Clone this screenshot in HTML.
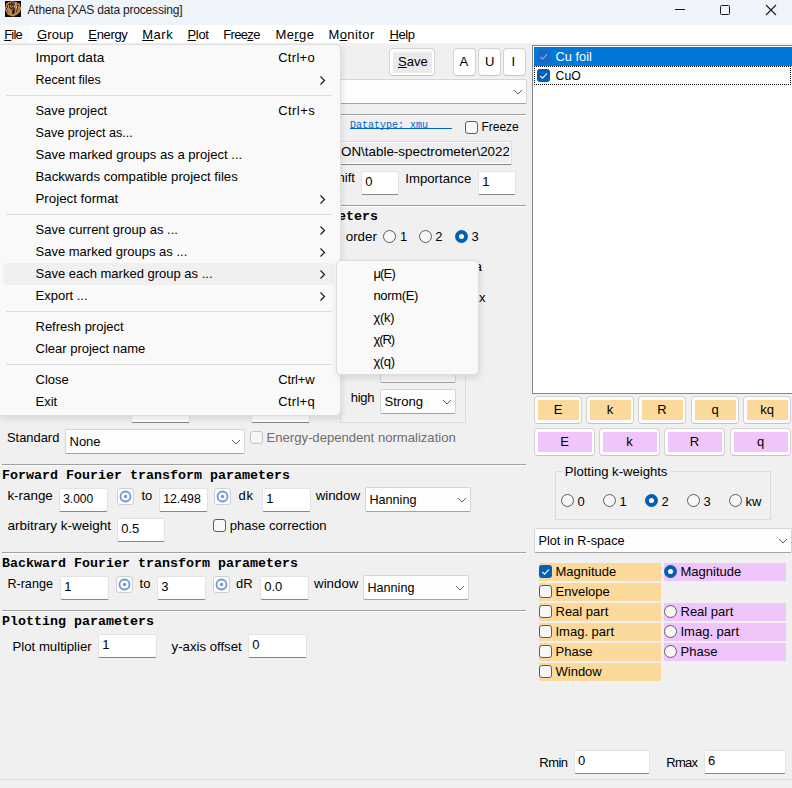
<!DOCTYPE html>
<html><head><meta charset="utf-8"><style>
html,body{margin:0;padding:0;}
body{width:792px;height:788px;overflow:hidden;position:relative;background:#f0f0f0;font-family:'Liberation Sans',sans-serif;}
div{position:absolute;}
.t{white-space:pre;}
u{text-decoration:underline;text-underline-offset:1px;}
</style></head><body>
<div style="left:389px;top:48px;width:46px;height:28px;background:#fdfdfd;border:1px solid #d2d2d2;border-bottom-color:#c4c4c4;border-radius:4px;box-sizing:border-box;"></div><div style="left:392.5px;top:51.5px;width:39px;height:21px;background:#ece9eb;"></div><div class="t" style="left:398.00px;top:54px;font-size:13px;line-height:16px;color:#000;font-family:'Liberation Sans',sans-serif;"><u>S</u>ave</div><div style="left:453px;top:48px;width:23px;height:28px;background:#fdfdfd;border:1px solid #d2d2d2;border-bottom-color:#c4c4c4;border-radius:4px;box-sizing:border-box;"></div><div class="t" style="left:459.50px;top:54px;font-size:13px;line-height:16px;color:#000;font-family:'Liberation Sans',sans-serif;">A</div><div style="left:478px;top:48px;width:23px;height:28px;background:#fdfdfd;border:1px solid #d2d2d2;border-bottom-color:#c4c4c4;border-radius:4px;box-sizing:border-box;"></div><div class="t" style="left:485.00px;top:54px;font-size:13px;line-height:16px;color:#000;font-family:'Liberation Sans',sans-serif;">U</div><div style="left:503px;top:48px;width:23px;height:28px;background:#fdfdfd;border:1px solid #d2d2d2;border-bottom-color:#c4c4c4;border-radius:4px;box-sizing:border-box;"></div><div class="t" style="left:511.50px;top:54px;font-size:13px;line-height:16px;color:#000;font-family:'Liberation Sans',sans-serif;">I</div><div style="left:60px;top:79px;width:467px;height:25px;background:#fdfdfd;border:1px solid #d5d5d5;border-bottom-color:#a3a3a3;box-sizing:border-box;border-radius:2px;"></div><svg style="position:absolute;left:513px;top:87.5px" width="10" height="8"><path d="M1 2 L5 6 L9 2" fill="none" stroke="#5f5f5f" stroke-width="1.0"/></svg><div style="left:2px;top:114px;width:524px;height:1px;background:#a0a0a0;"></div><div style="left:2px;top:115px;width:524px;height:1px;background:#ffffff;"></div><div class="t" style="left:350.00px;top:118px;font-size:10px;line-height:16px;color:#0066cc;font-family:'Liberation Mono',monospace;">Datatype: xmu</div><div style="left:350px;top:128px;width:102px;height:1px;background:#0066cc;"></div><div style="left:465px;top:121px;width:13px;height:13px;background:#f8f8f8;border:1px solid #5c5c5c;border-radius:3px;box-sizing:border-box;"></div><div class="t" style="left:481.60px;top:119px;font-size:12.0px;line-height:16px;color:#000;font-family:'Liberation Sans',sans-serif;letter-spacing:-0.070px;">Freeze</div><div style="left:60px;top:141px;width:452px;height:24px;background:#eeeeee;border:1px solid #dadada;border-bottom-color:#878787;box-shadow:inset 1px 1px 0 #fff,inset -1px -1px 0 #fff;box-sizing:border-box;border-radius:2px;"></div><div class="t" style="left:341.00px;top:144px;font-size:13.4px;line-height:16px;color:#000;font-family:'Liberation Sans',sans-serif;width:168px;overflow:hidden;white-space:nowrap;">ON\table-spectrometer\20221103\Cu</div><div class="t" style="left:286.25px;top:170px;font-size:13px;line-height:16px;color:#000;font-family:'Liberation Sans',sans-serif;">Energy shift</div><div style="left:361px;top:171px;width:38px;height:24px;background:#fff;border:1px solid #e3e3e3;border-bottom:1px solid #868686;box-sizing:border-box;border-radius:2px;"></div><div class="t" style="left:365.20px;top:174px;font-size:13px;line-height:16px;color:#000;font-family:'Liberation Sans',sans-serif;">0</div><div class="t" style="left:405.30px;top:171px;font-size:13.2px;line-height:16px;color:#000;font-family:'Liberation Sans',sans-serif;">Importance</div><div style="left:478px;top:171px;width:38px;height:24px;background:#fff;border:1px solid #e3e3e3;border-bottom:1px solid #868686;box-sizing:border-box;border-radius:2px;"></div><div class="t" style="left:482.20px;top:174px;font-size:13px;line-height:16px;color:#000;font-family:'Liberation Sans',sans-serif;">1</div><div style="left:2px;top:205px;width:524px;height:1px;background:#a0a0a0;"></div><div style="left:2px;top:206px;width:524px;height:1px;background:#ffffff;"></div><div class="t" style="left:2.00px;top:209px;font-size:13.33px;line-height:16px;color:#000;font-family:'Liberation Mono',monospace;font-weight:bold;">Background removal and normalization parameters</div><div class="t" style="left:345.70px;top:229px;font-size:13.4px;line-height:16px;color:#000;font-family:'Liberation Sans',sans-serif;">order</div><div style="left:383px;top:230px;width:13px;height:13px;background:#f8f8f8;border:1px solid #5c5c5c;border-radius:50%;box-sizing:border-box;"></div><div class="t" style="left:400.00px;top:229px;font-size:13px;line-height:16px;color:#000;font-family:'Liberation Sans',sans-serif;">1</div><div style="left:419px;top:230px;width:13px;height:13px;background:#f8f8f8;border:1px solid #5c5c5c;border-radius:50%;box-sizing:border-box;"></div><div class="t" style="left:435.20px;top:229px;font-size:13px;line-height:16px;color:#000;font-family:'Liberation Sans',sans-serif;">2</div><div style="left:455px;top:230px;width:13px;height:13px;background:#005fb8;border-radius:50%;"></div><div style="left:459px;top:234px;width:5px;height:5px;background:#fff;border-radius:50%;"></div><div class="t" style="left:471.40px;top:229px;font-size:13px;line-height:16px;color:#000;font-family:'Liberation Sans',sans-serif;">3</div><div class="t" style="left:474.80px;top:259px;font-size:13px;line-height:16px;color:#000;font-family:'Liberation Sans',sans-serif;">a</div><div class="t" style="left:476.00px;top:290px;font-size:13px;line-height:16px;color:#000;font-family:'Liberation Sans',sans-serif;">ix</div><div style="left:340px;top:300px;width:126px;height:123px;border:1px solid #dcdcdc;box-sizing:border-box;"></div><div style="left:380px;top:359px;width:76px;height:24px;background:#f5f5f5;border:1px solid #d5d5d5;border-bottom-color:#a3a3a3;box-sizing:border-box;border-radius:2px;"></div><svg style="position:absolute;left:442px;top:367.0px" width="10" height="8"><path d="M1 2 L5 6 L9 2" fill="none" stroke="#5f5f5f" stroke-width="1.0"/></svg><div class="t" style="left:350.70px;top:390px;font-size:13px;line-height:16px;color:#000;font-family:'Liberation Sans',sans-serif;letter-spacing:-0.267px;">high</div><div style="left:380px;top:389px;width:76px;height:25px;background:#fdfdfd;border:1px solid #d5d5d5;border-bottom-color:#a3a3a3;box-sizing:border-box;border-radius:2px;"></div><svg style="position:absolute;left:442px;top:397.5px" width="10" height="8"><path d="M1 2 L5 6 L9 2" fill="none" stroke="#5f5f5f" stroke-width="1.0"/></svg><div class="t" style="left:384.50px;top:394px;font-size:13.1px;line-height:16px;color:#000;font-family:'Liberation Sans',sans-serif;">Strong</div><div style="left:131px;top:399px;width:59px;height:24px;background:#fff;border:1px solid #e3e3e3;border-bottom:1px solid #868686;box-sizing:border-box;border-radius:2px;"></div><div style="left:251px;top:399px;width:59px;height:24px;background:#fff;border:1px solid #e3e3e3;border-bottom:1px solid #868686;box-sizing:border-box;border-radius:2px;"></div><div class="t" style="left:7.00px;top:430px;font-size:12.9px;line-height:16px;color:#000;font-family:'Liberation Sans',sans-serif;">Standard</div><div style="left:65px;top:429px;width:180px;height:25px;background:#fdfdfd;border:1px solid #d5d5d5;border-bottom-color:#a3a3a3;box-sizing:border-box;border-radius:2px;"></div><svg style="position:absolute;left:231px;top:437.5px" width="10" height="8"><path d="M1 2 L5 6 L9 2" fill="none" stroke="#5f5f5f" stroke-width="1.0"/></svg><div class="t" style="left:69.50px;top:434px;font-size:13px;line-height:16px;color:#000;font-family:'Liberation Sans',sans-serif;">None</div><div style="left:250px;top:431px;width:13px;height:13px;background:#f6f6f6;border:1px solid #c6c6c6;border-radius:3px;box-sizing:border-box;"></div><div class="t" style="left:266.50px;top:430px;font-size:13.1px;line-height:16px;color:#6d6d6d;font-family:'Liberation Sans',sans-serif;">Energy-dependent normalization</div><div style="left:2px;top:464px;width:524px;height:1px;background:#a0a0a0;"></div><div style="left:2px;top:465px;width:524px;height:1px;background:#ffffff;"></div><div class="t" style="left:2.00px;top:468px;font-size:13.33px;line-height:16px;color:#000;font-family:'Liberation Mono',monospace;font-weight:bold;">Forward Fourier transform parameters</div><div class="t" style="left:7.40px;top:488px;font-size:13.4px;line-height:16px;color:#000;font-family:'Liberation Sans',sans-serif;">k-range</div><div style="left:59px;top:488px;width:49px;height:24px;background:#fff;border:1px solid #e3e3e3;border-bottom:1px solid #868686;box-sizing:border-box;border-radius:2px;"></div><div class="t" style="left:63.20px;top:491px;font-size:12.0px;line-height:16px;color:#000;font-family:'Liberation Sans',sans-serif;">3.000</div><div style="left:117px;top:488px;width:17px;height:17px;background:#fdfdfd;border:1px solid #d0d0d0;border-radius:3px;box-sizing:border-box;"></div><svg style="position:absolute;left:117px;top:488px" width="17" height="17"><circle cx="8.5" cy="8.5" r="5" fill="none" stroke="#7197d6" stroke-width="1.8"/><circle cx="8.5" cy="8.5" r="1.7" fill="#7197d6"/></svg><div class="t" style="left:141.40px;top:488px;font-size:13px;line-height:16px;color:#000;font-family:'Liberation Sans',sans-serif;">to</div><div style="left:159px;top:488px;width:49px;height:24px;background:#fff;border:1px solid #e3e3e3;border-bottom:1px solid #868686;box-sizing:border-box;border-radius:2px;"></div><div class="t" style="left:163.20px;top:491px;font-size:12.3px;line-height:16px;color:#000;font-family:'Liberation Sans',sans-serif;">12.498</div><div style="left:214px;top:488px;width:17px;height:17px;background:#fdfdfd;border:1px solid #d0d0d0;border-radius:3px;box-sizing:border-box;"></div><svg style="position:absolute;left:214px;top:488px" width="17" height="17"><circle cx="8.5" cy="8.5" r="5" fill="none" stroke="#7197d6" stroke-width="1.8"/><circle cx="8.5" cy="8.5" r="1.7" fill="#7197d6"/></svg><div class="t" style="left:238.60px;top:488px;font-size:13px;line-height:16px;color:#000;font-family:'Liberation Sans',sans-serif;letter-spacing:0.800px;">dk</div><div style="left:262px;top:488px;width:49px;height:24px;background:#fff;border:1px solid #e3e3e3;border-bottom:1px solid #868686;box-sizing:border-box;border-radius:2px;"></div><div class="t" style="left:266.20px;top:491px;font-size:13px;line-height:16px;color:#000;font-family:'Liberation Sans',sans-serif;">1</div><div class="t" style="left:315.65px;top:488px;font-size:13.3px;line-height:16px;color:#000;font-family:'Liberation Sans',sans-serif;">window</div><div style="left:365px;top:487px;width:106px;height:25px;background:#fdfdfd;border:1px solid #d5d5d5;border-bottom-color:#a3a3a3;box-sizing:border-box;border-radius:2px;"></div><svg style="position:absolute;left:457px;top:495.5px" width="10" height="8"><path d="M1 2 L5 6 L9 2" fill="none" stroke="#5f5f5f" stroke-width="1.0"/></svg><div class="t" style="left:369.50px;top:492px;font-size:12.6px;line-height:16px;color:#000;font-family:'Liberation Sans',sans-serif;">Hanning</div><div class="t" style="left:7.40px;top:518px;font-size:13.5px;line-height:16px;color:#000;font-family:'Liberation Sans',sans-serif;">arbitrary k-weight</div><div style="left:117px;top:518px;width:48px;height:24px;background:#fff;border:1px solid #e3e3e3;border-bottom:1px solid #868686;box-sizing:border-box;border-radius:2px;"></div><div class="t" style="left:121.20px;top:521px;font-size:13px;line-height:16px;color:#000;font-family:'Liberation Sans',sans-serif;">0.5</div><div style="left:213px;top:519px;width:13px;height:13px;background:#f8f8f8;border:1px solid #5c5c5c;border-radius:3px;box-sizing:border-box;"></div><div class="t" style="left:229.70px;top:518px;font-size:13.1px;line-height:16px;color:#000;font-family:'Liberation Sans',sans-serif;">phase correction</div><div style="left:2px;top:552px;width:524px;height:1px;background:#a0a0a0;"></div><div style="left:2px;top:553px;width:524px;height:1px;background:#ffffff;"></div><div class="t" style="left:2.00px;top:556px;font-size:13.33px;line-height:16px;color:#000;font-family:'Liberation Mono',monospace;font-weight:bold;">Backward Fourier transform parameters</div><div class="t" style="left:7.40px;top:576px;font-size:12.6px;line-height:16px;color:#000;font-family:'Liberation Sans',sans-serif;">R-range</div><div style="left:60px;top:576px;width:49px;height:24px;background:#fff;border:1px solid #e3e3e3;border-bottom:1px solid #868686;box-sizing:border-box;border-radius:2px;"></div><div class="t" style="left:64.20px;top:579px;font-size:13px;line-height:16px;color:#000;font-family:'Liberation Sans',sans-serif;">1</div><div style="left:116px;top:576px;width:17px;height:17px;background:#fdfdfd;border:1px solid #d0d0d0;border-radius:3px;box-sizing:border-box;"></div><svg style="position:absolute;left:116px;top:576px" width="17" height="17"><circle cx="8.5" cy="8.5" r="5" fill="none" stroke="#7197d6" stroke-width="1.8"/><circle cx="8.5" cy="8.5" r="1.7" fill="#7197d6"/></svg><div class="t" style="left:139.60px;top:576px;font-size:13px;line-height:16px;color:#000;font-family:'Liberation Sans',sans-serif;">to</div><div style="left:157px;top:576px;width:49px;height:24px;background:#fff;border:1px solid #e3e3e3;border-bottom:1px solid #868686;box-sizing:border-box;border-radius:2px;"></div><div class="t" style="left:161.20px;top:579px;font-size:13px;line-height:16px;color:#000;font-family:'Liberation Sans',sans-serif;">3</div><div style="left:213px;top:576px;width:17px;height:17px;background:#fdfdfd;border:1px solid #d0d0d0;border-radius:3px;box-sizing:border-box;"></div><svg style="position:absolute;left:213px;top:576px" width="17" height="17"><circle cx="8.5" cy="8.5" r="5" fill="none" stroke="#7197d6" stroke-width="1.8"/><circle cx="8.5" cy="8.5" r="1.7" fill="#7197d6"/></svg><div class="t" style="left:236.00px;top:576px;font-size:13px;line-height:16px;color:#000;font-family:'Liberation Sans',sans-serif;letter-spacing:-0.100px;">dR</div><div style="left:260px;top:576px;width:49px;height:24px;background:#fff;border:1px solid #e3e3e3;border-bottom:1px solid #868686;box-sizing:border-box;border-radius:2px;"></div><div class="t" style="left:264.20px;top:579px;font-size:13px;line-height:16px;color:#000;font-family:'Liberation Sans',sans-serif;">0.0</div><div class="t" style="left:314.05px;top:576px;font-size:13.3px;line-height:16px;color:#000;font-family:'Liberation Sans',sans-serif;">window</div><div style="left:363px;top:575px;width:106px;height:25px;background:#fdfdfd;border:1px solid #d5d5d5;border-bottom-color:#a3a3a3;box-sizing:border-box;border-radius:2px;"></div><svg style="position:absolute;left:455px;top:583.5px" width="10" height="8"><path d="M1 2 L5 6 L9 2" fill="none" stroke="#5f5f5f" stroke-width="1.0"/></svg><div class="t" style="left:367.50px;top:580px;font-size:12.6px;line-height:16px;color:#000;font-family:'Liberation Sans',sans-serif;">Hanning</div><div style="left:2px;top:610px;width:524px;height:1px;background:#a0a0a0;"></div><div style="left:2px;top:611px;width:524px;height:1px;background:#ffffff;"></div><div class="t" style="left:2.00px;top:614px;font-size:13.33px;line-height:16px;color:#000;font-family:'Liberation Mono',monospace;font-weight:bold;">Plotting parameters</div><div class="t" style="left:12.50px;top:639px;font-size:13.2px;line-height:16px;color:#000;font-family:'Liberation Sans',sans-serif;">Plot multiplier</div><div style="left:98px;top:634px;width:59px;height:24px;background:#fff;border:1px solid #e3e3e3;border-bottom:1px solid #868686;box-sizing:border-box;border-radius:2px;"></div><div class="t" style="left:102.20px;top:637px;font-size:13px;line-height:16px;color:#000;font-family:'Liberation Sans',sans-serif;">1</div><div class="t" style="left:171.60px;top:639px;font-size:13.2px;line-height:16px;color:#000;font-family:'Liberation Sans',sans-serif;">y-axis offset</div><div style="left:248px;top:634px;width:59px;height:24px;background:#fff;border:1px solid #e3e3e3;border-bottom:1px solid #868686;box-sizing:border-box;border-radius:2px;"></div><div class="t" style="left:252.20px;top:637px;font-size:13px;line-height:16px;color:#000;font-family:'Liberation Sans',sans-serif;">0</div><div style="left:0px;top:779px;width:792px;height:1px;background:#dadada;"></div><div style="left:532px;top:45px;width:262px;height:349px;background:#fff;border:1px solid #828790;box-sizing:border-box;"></div><div style="left:534px;top:47px;width:258px;height:19px;background:#0078d7;"></div><div style="left:537px;top:50px;width:13px;height:13px;background:#1a66c2;border-radius:3px;"></div><svg style="position:absolute;left:537px;top:50px" width="13" height="13"><path d="M3.2 6.8 L5.6 9.2 L10 4.4" fill="none" stroke="#7fb0e6" stroke-width="1.1"/></svg><div class="t" style="left:555.60px;top:49px;font-size:12.8px;line-height:16px;color:#fff;font-family:'Liberation Sans',sans-serif;">Cu foil</div><div style="left:534px;top:66px;width:257px;height:19px;border:1px dotted #000;box-sizing:border-box;"></div><div style="left:537px;top:69px;width:13px;height:13px;background:#005fb8;border-radius:3px;"></div><svg style="position:absolute;left:537px;top:69px" width="13" height="13"><path d="M3.2 6.8 L5.6 9.2 L10 4.4" fill="none" stroke="#fff" stroke-width="1.1"/></svg><div class="t" style="left:555.60px;top:68px;font-size:12.2px;line-height:16px;color:#000;font-family:'Liberation Sans',sans-serif;">CuO</div><div style="left:534px;top:396px;width:48px;height:28px;background:#fdfdfd;border:1px solid #d2d2d2;border-bottom-color:#c4c4c4;border-radius:4px;box-sizing:border-box;"></div><div style="left:537.5px;top:400px;width:41px;height:20px;background:#fad99b;"></div><div class="t" style="left:553.66px;top:402px;font-size:13px;line-height:16px;color:#000;font-family:'Liberation Sans',sans-serif;">E</div><div style="left:586px;top:396px;width:48px;height:28px;background:#fdfdfd;border:1px solid #d2d2d2;border-bottom-color:#c4c4c4;border-radius:4px;box-sizing:border-box;"></div><div style="left:589.5px;top:400px;width:41px;height:20px;background:#fad99b;"></div><div class="t" style="left:606.75px;top:402px;font-size:13px;line-height:16px;color:#000;font-family:'Liberation Sans',sans-serif;">k</div><div style="left:638px;top:396px;width:48px;height:28px;background:#fdfdfd;border:1px solid #d2d2d2;border-bottom-color:#c4c4c4;border-radius:4px;box-sizing:border-box;"></div><div style="left:641.5px;top:400px;width:41px;height:20px;background:#fad99b;"></div><div class="t" style="left:657.31px;top:402px;font-size:13px;line-height:16px;color:#000;font-family:'Liberation Sans',sans-serif;">R</div><div style="left:691px;top:396px;width:48px;height:28px;background:#fdfdfd;border:1px solid #d2d2d2;border-bottom-color:#c4c4c4;border-radius:4px;box-sizing:border-box;"></div><div style="left:694.5px;top:400px;width:41px;height:20px;background:#fad99b;"></div><div class="t" style="left:711.39px;top:402px;font-size:13px;line-height:16px;color:#000;font-family:'Liberation Sans',sans-serif;">q</div><div style="left:743px;top:396px;width:48px;height:28px;background:#fdfdfd;border:1px solid #d2d2d2;border-bottom-color:#c4c4c4;border-radius:4px;box-sizing:border-box;"></div><div style="left:746.5px;top:400px;width:41px;height:20px;background:#fad99b;"></div><div class="t" style="left:760.14px;top:402px;font-size:13px;line-height:16px;color:#000;font-family:'Liberation Sans',sans-serif;">kq</div><div style="left:534px;top:428px;width:61px;height:28px;background:#fdfdfd;border:1px solid #d2d2d2;border-bottom-color:#c4c4c4;border-radius:4px;box-sizing:border-box;"></div><div style="left:537.5px;top:432px;width:54px;height:20px;background:#efc5fb;"></div><div class="t" style="left:560.16px;top:434px;font-size:13px;line-height:16px;color:#000;font-family:'Liberation Sans',sans-serif;">E</div><div style="left:599px;top:428px;width:61px;height:28px;background:#fdfdfd;border:1px solid #d2d2d2;border-bottom-color:#c4c4c4;border-radius:4px;box-sizing:border-box;"></div><div style="left:602.5px;top:432px;width:54px;height:20px;background:#efc5fb;"></div><div class="t" style="left:626.25px;top:434px;font-size:13px;line-height:16px;color:#000;font-family:'Liberation Sans',sans-serif;">k</div><div style="left:664px;top:428px;width:61px;height:28px;background:#fdfdfd;border:1px solid #d2d2d2;border-bottom-color:#c4c4c4;border-radius:4px;box-sizing:border-box;"></div><div style="left:667.5px;top:432px;width:54px;height:20px;background:#efc5fb;"></div><div class="t" style="left:689.81px;top:434px;font-size:13px;line-height:16px;color:#000;font-family:'Liberation Sans',sans-serif;">R</div><div style="left:730px;top:428px;width:61px;height:28px;background:#fdfdfd;border:1px solid #d2d2d2;border-bottom-color:#c4c4c4;border-radius:4px;box-sizing:border-box;"></div><div style="left:733.5px;top:432px;width:54px;height:20px;background:#efc5fb;"></div><div class="t" style="left:756.89px;top:434px;font-size:13px;line-height:16px;color:#000;font-family:'Liberation Sans',sans-serif;">q</div><div style="left:555px;top:471px;width:216px;height:49px;border:1px solid #dcdcdc;box-sizing:border-box;"></div><div style="left:562px;top:465px;width:109px;height:12px;background:#f0f0f0;"></div><div class="t" style="left:564.80px;top:464px;font-size:13.1px;line-height:16px;color:#000;font-family:'Liberation Sans',sans-serif;">Plotting k-weights</div><div style="left:561px;top:494px;width:13px;height:13px;background:#f8f8f8;border:1px solid #5c5c5c;border-radius:50%;box-sizing:border-box;"></div><div class="t" style="left:577.50px;top:494px;font-size:13px;line-height:16px;color:#000;font-family:'Liberation Sans',sans-serif;">0</div><div style="left:603px;top:494px;width:13px;height:13px;background:#f8f8f8;border:1px solid #5c5c5c;border-radius:50%;box-sizing:border-box;"></div><div class="t" style="left:619.50px;top:494px;font-size:13px;line-height:16px;color:#000;font-family:'Liberation Sans',sans-serif;">1</div><div style="left:645px;top:494px;width:13px;height:13px;background:#005fb8;border-radius:50%;"></div><div style="left:649px;top:498px;width:5px;height:5px;background:#fff;border-radius:50%;"></div><div class="t" style="left:661.50px;top:494px;font-size:13px;line-height:16px;color:#000;font-family:'Liberation Sans',sans-serif;">2</div><div style="left:687px;top:494px;width:13px;height:13px;background:#f8f8f8;border:1px solid #5c5c5c;border-radius:50%;box-sizing:border-box;"></div><div class="t" style="left:703.50px;top:494px;font-size:13px;line-height:16px;color:#000;font-family:'Liberation Sans',sans-serif;">3</div><div style="left:729px;top:494px;width:13px;height:13px;background:#f8f8f8;border:1px solid #5c5c5c;border-radius:50%;box-sizing:border-box;"></div><div class="t" style="left:745.50px;top:494px;font-size:13px;line-height:16px;color:#000;font-family:'Liberation Sans',sans-serif;">kw</div><div style="left:534px;top:528px;width:258px;height:25px;background:#fdfdfd;border:1px solid #d5d5d5;border-bottom-color:#a3a3a3;box-sizing:border-box;border-radius:2px;"></div><svg style="position:absolute;left:778px;top:536.5px" width="10" height="8"><path d="M1 2 L5 6 L9 2" fill="none" stroke="#5f5f5f" stroke-width="1.0"/></svg><div class="t" style="left:538.50px;top:533px;font-size:12.7px;line-height:16px;color:#000;font-family:'Liberation Sans',sans-serif;">Plot in R-space</div><div style="left:539px;top:563px;width:122px;height:18px;background:#fad99b;"></div><div style="left:539px;top:565px;width:13px;height:13px;background:#005fb8;border-radius:3px;"></div><svg style="position:absolute;left:539px;top:565px" width="13" height="13"><path d="M3.2 6.8 L5.6 9.2 L10 4.4" fill="none" stroke="#fff" stroke-width="1.1"/></svg><div class="t" style="left:555.50px;top:564px;font-size:13px;line-height:16px;color:#000;font-family:'Liberation Sans',sans-serif;">Magnitude</div><div style="left:539px;top:583px;width:122px;height:18px;background:#fad99b;"></div><div style="left:539px;top:585px;width:13px;height:13px;background:#f8f8f8;border:1px solid #5c5c5c;border-radius:3px;box-sizing:border-box;"></div><div class="t" style="left:555.50px;top:584px;font-size:13px;line-height:16px;color:#000;font-family:'Liberation Sans',sans-serif;">Envelope</div><div style="left:539px;top:603px;width:122px;height:18px;background:#fad99b;"></div><div style="left:539px;top:605px;width:13px;height:13px;background:#f8f8f8;border:1px solid #5c5c5c;border-radius:3px;box-sizing:border-box;"></div><div class="t" style="left:555.50px;top:604px;font-size:13px;line-height:16px;color:#000;font-family:'Liberation Sans',sans-serif;">Real part</div><div style="left:539px;top:623px;width:122px;height:18px;background:#fad99b;"></div><div style="left:539px;top:625px;width:13px;height:13px;background:#f8f8f8;border:1px solid #5c5c5c;border-radius:3px;box-sizing:border-box;"></div><div class="t" style="left:555.50px;top:624px;font-size:13px;line-height:16px;color:#000;font-family:'Liberation Sans',sans-serif;">Imag. part</div><div style="left:539px;top:643px;width:122px;height:18px;background:#fad99b;"></div><div style="left:539px;top:645px;width:13px;height:13px;background:#f8f8f8;border:1px solid #5c5c5c;border-radius:3px;box-sizing:border-box;"></div><div class="t" style="left:555.50px;top:644px;font-size:13px;line-height:16px;color:#000;font-family:'Liberation Sans',sans-serif;">Phase</div><div style="left:539px;top:663px;width:122px;height:18px;background:#fad99b;"></div><div style="left:539px;top:665px;width:13px;height:13px;background:#f8f8f8;border:1px solid #5c5c5c;border-radius:3px;box-sizing:border-box;"></div><div class="t" style="left:555.50px;top:664px;font-size:13px;line-height:16px;color:#000;font-family:'Liberation Sans',sans-serif;">Window</div><div style="left:664px;top:563px;width:122px;height:18px;background:#efc5fb;"></div><div style="left:664px;top:565px;width:13px;height:13px;background:#005fb8;border-radius:50%;"></div><div style="left:668px;top:569px;width:5px;height:5px;background:#fff;border-radius:50%;"></div><div class="t" style="left:680.50px;top:564px;font-size:13px;line-height:16px;color:#000;font-family:'Liberation Sans',sans-serif;">Magnitude</div><div style="left:664px;top:603px;width:122px;height:18px;background:#efc5fb;"></div><div style="left:664px;top:605px;width:13px;height:13px;background:#f8f8f8;border:1px solid #5c5c5c;border-radius:50%;box-sizing:border-box;"></div><div class="t" style="left:680.50px;top:604px;font-size:13px;line-height:16px;color:#000;font-family:'Liberation Sans',sans-serif;">Real part</div><div style="left:664px;top:623px;width:122px;height:18px;background:#efc5fb;"></div><div style="left:664px;top:625px;width:13px;height:13px;background:#f8f8f8;border:1px solid #5c5c5c;border-radius:50%;box-sizing:border-box;"></div><div class="t" style="left:680.50px;top:624px;font-size:13px;line-height:16px;color:#000;font-family:'Liberation Sans',sans-serif;">Imag. part</div><div style="left:664px;top:643px;width:122px;height:18px;background:#efc5fb;"></div><div style="left:664px;top:645px;width:13px;height:13px;background:#f8f8f8;border:1px solid #5c5c5c;border-radius:50%;box-sizing:border-box;"></div><div class="t" style="left:680.50px;top:644px;font-size:13px;line-height:16px;color:#000;font-family:'Liberation Sans',sans-serif;">Phase</div><div class="t" style="left:539.30px;top:755px;font-size:13px;line-height:16px;color:#000;font-family:'Liberation Sans',sans-serif;letter-spacing:-0.550px;">Rmin</div><div style="left:574px;top:750px;width:76px;height:24px;background:#fff;border:1px solid #e3e3e3;border-bottom:1px solid #868686;box-sizing:border-box;border-radius:2px;"></div><div class="t" style="left:578.00px;top:753px;font-size:13px;line-height:16px;color:#000;font-family:'Liberation Sans',sans-serif;">0</div><div class="t" style="left:666.30px;top:755px;font-size:13px;line-height:16px;color:#000;font-family:'Liberation Sans',sans-serif;letter-spacing:-0.750px;">Rmax</div><div style="left:704px;top:750px;width:82px;height:24px;background:#fff;border:1px solid #e3e3e3;border-bottom:1px solid #868686;box-sizing:border-box;border-radius:2px;"></div><div class="t" style="left:708.00px;top:753px;font-size:13px;line-height:16px;color:#000;font-family:'Liberation Sans',sans-serif;">6</div>
<div style="left:0px;top:0px;width:792px;height:25px;background:#eef4fa;"></div><svg style="position:absolute;left:5px;top:1px" width="16" height="16" shape-rendering="crispEdges"><rect x="0" y="0" width="5" height="1" fill="#0c0a0a"/><rect x="5" y="0" width="1" height="1" fill="#4a3420"/><rect x="6" y="0" width="1" height="1" fill="#b8824f"/><rect x="7" y="0" width="2" height="1" fill="#4c4c60"/><rect x="9" y="0" width="1" height="1" fill="#4a3420"/><rect x="10" y="0" width="6" height="1" fill="#0c0a0a"/><rect x="0" y="1" width="2" height="1" fill="#0c0a0a"/><rect x="2" y="1" width="1" height="1" fill="#4a3420"/><rect x="3" y="1" width="3" height="1" fill="#b8824f"/><rect x="6" y="1" width="1" height="1" fill="#4a3420"/><rect x="7" y="1" width="2" height="1" fill="#4c4c60"/><rect x="9" y="1" width="3" height="1" fill="#b8824f"/><rect x="12" y="1" width="1" height="1" fill="#4a3420"/><rect x="13" y="1" width="3" height="1" fill="#0c0a0a"/><rect x="0" y="2" width="1" height="1" fill="#0c0a0a"/><rect x="1" y="2" width="1" height="1" fill="#4a3420"/><rect x="2" y="2" width="2" height="1" fill="#b8824f"/><rect x="4" y="2" width="3" height="1" fill="#4a3420"/><rect x="7" y="2" width="2" height="1" fill="#4c4c60"/><rect x="9" y="2" width="1" height="1" fill="#4a3420"/><rect x="10" y="2" width="1" height="1" fill="#e3b574"/><rect x="11" y="2" width="1" height="1" fill="#b8824f"/><rect x="12" y="2" width="1" height="1" fill="#4a3420"/><rect x="13" y="2" width="1" height="1" fill="#b8824f"/><rect x="14" y="2" width="1" height="1" fill="#4a3420"/><rect x="15" y="2" width="1" height="1" fill="#0c0a0a"/><rect x="0" y="3" width="1" height="1" fill="#0c0a0a"/><rect x="1" y="3" width="2" height="1" fill="#b8824f"/><rect x="3" y="3" width="5" height="1" fill="#4a3420"/><rect x="8" y="3" width="1" height="1" fill="#4c4c60"/><rect x="9" y="3" width="1" height="1" fill="#4a3420"/><rect x="10" y="3" width="1" height="1" fill="#e3b574"/><rect x="11" y="3" width="4" height="1" fill="#b8824f"/><rect x="15" y="3" width="1" height="1" fill="#0c0a0a"/><rect x="0" y="4" width="1" height="1" fill="#4a3420"/><rect x="1" y="4" width="1" height="1" fill="#b8824f"/><rect x="2" y="4" width="1" height="1" fill="#4a3420"/><rect x="3" y="4" width="1" height="1" fill="#b8824f"/><rect x="4" y="4" width="1" height="1" fill="#4a3420"/><rect x="5" y="4" width="1" height="1" fill="#b8824f"/><rect x="6" y="4" width="3" height="1" fill="#4a3420"/><rect x="9" y="4" width="3" height="1" fill="#b8824f"/><rect x="12" y="4" width="2" height="1" fill="#4a3420"/><rect x="14" y="4" width="1" height="1" fill="#b8824f"/><rect x="15" y="4" width="1" height="1" fill="#4a3420"/><rect x="0" y="5" width="1" height="1" fill="#4a3420"/><rect x="1" y="5" width="1" height="1" fill="#b8824f"/><rect x="2" y="5" width="1" height="1" fill="#4a3420"/><rect x="3" y="5" width="1" height="1" fill="#e3b574"/><rect x="4" y="5" width="1" height="1" fill="#4a3420"/><rect x="5" y="5" width="1" height="1" fill="#b8824f"/><rect x="6" y="5" width="1" height="1" fill="#4a3420"/><rect x="7" y="5" width="4" height="1" fill="#b8824f"/><rect x="11" y="5" width="1" height="1" fill="#e3b574"/><rect x="12" y="5" width="1" height="1" fill="#4a3420"/><rect x="13" y="5" width="2" height="1" fill="#b8824f"/><rect x="15" y="5" width="1" height="1" fill="#4a3420"/><rect x="0" y="6" width="2" height="1" fill="#b8824f"/><rect x="2" y="6" width="1" height="1" fill="#4a3420"/><rect x="3" y="6" width="1" height="1" fill="#b8824f"/><rect x="4" y="6" width="2" height="1" fill="#4a3420"/><rect x="6" y="6" width="1" height="1" fill="#b8824f"/><rect x="7" y="6" width="2" height="1" fill="#4a3420"/><rect x="9" y="6" width="2" height="1" fill="#b8824f"/><rect x="11" y="6" width="1" height="1" fill="#e3b574"/><rect x="12" y="6" width="1" height="1" fill="#4a3420"/><rect x="13" y="6" width="3" height="1" fill="#b8824f"/><rect x="0" y="7" width="1" height="1" fill="#b8824f"/><rect x="1" y="7" width="1" height="1" fill="#4a3420"/><rect x="2" y="7" width="3" height="1" fill="#b8824f"/><rect x="5" y="7" width="5" height="1" fill="#4a3420"/><rect x="10" y="7" width="2" height="1" fill="#b8824f"/><rect x="12" y="7" width="1" height="1" fill="#4a3420"/><rect x="13" y="7" width="3" height="1" fill="#b8824f"/><rect x="0" y="8" width="1" height="1" fill="#b8824f"/><rect x="1" y="8" width="1" height="1" fill="#4a3420"/><rect x="2" y="8" width="4" height="1" fill="#b8824f"/><rect x="6" y="8" width="1" height="1" fill="#4a3420"/><rect x="7" y="8" width="1" height="1" fill="#b8824f"/><rect x="8" y="8" width="2" height="1" fill="#4a3420"/><rect x="10" y="8" width="2" height="1" fill="#b8824f"/><rect x="12" y="8" width="1" height="1" fill="#4a3420"/><rect x="13" y="8" width="3" height="1" fill="#b8824f"/><rect x="0" y="9" width="1" height="1" fill="#4a3420"/><rect x="1" y="9" width="6" height="1" fill="#b8824f"/><rect x="7" y="9" width="1" height="1" fill="#4a3420"/><rect x="8" y="9" width="1" height="1" fill="#0c0a0a"/><rect x="9" y="9" width="1" height="1" fill="#4a3420"/><rect x="10" y="9" width="1" height="1" fill="#b8824f"/><rect x="11" y="9" width="1" height="1" fill="#4a3420"/><rect x="12" y="9" width="3" height="1" fill="#b8824f"/><rect x="15" y="9" width="1" height="1" fill="#4a3420"/><rect x="0" y="10" width="1" height="1" fill="#4a3420"/><rect x="1" y="10" width="1" height="1" fill="#b8824f"/><rect x="2" y="10" width="1" height="1" fill="#4a3420"/><rect x="3" y="10" width="4" height="1" fill="#b8824f"/><rect x="7" y="10" width="1" height="1" fill="#4a3420"/><rect x="8" y="10" width="1" height="1" fill="#0c0a0a"/><rect x="9" y="10" width="1" height="1" fill="#4a3420"/><rect x="10" y="10" width="1" height="1" fill="#b8824f"/><rect x="11" y="10" width="1" height="1" fill="#4a3420"/><rect x="12" y="10" width="3" height="1" fill="#b8824f"/><rect x="15" y="10" width="1" height="1" fill="#4a3420"/><rect x="0" y="11" width="1" height="1" fill="#0c0a0a"/><rect x="1" y="11" width="1" height="1" fill="#4a3420"/><rect x="2" y="11" width="5" height="1" fill="#b8824f"/><rect x="7" y="11" width="1" height="1" fill="#4a3420"/><rect x="8" y="11" width="1" height="1" fill="#0c0a0a"/><rect x="9" y="11" width="1" height="1" fill="#4a3420"/><rect x="10" y="11" width="4" height="1" fill="#b8824f"/><rect x="14" y="11" width="1" height="1" fill="#4a3420"/><rect x="15" y="11" width="1" height="1" fill="#0c0a0a"/><rect x="0" y="12" width="2" height="1" fill="#0c0a0a"/><rect x="2" y="12" width="5" height="1" fill="#b8824f"/><rect x="7" y="12" width="1" height="1" fill="#4a3420"/><rect x="8" y="12" width="1" height="1" fill="#0c0a0a"/><rect x="9" y="12" width="4" height="1" fill="#b8824f"/><rect x="13" y="12" width="1" height="1" fill="#4a3420"/><rect x="14" y="12" width="2" height="1" fill="#0c0a0a"/><rect x="0" y="13" width="2" height="1" fill="#0c0a0a"/><rect x="2" y="13" width="1" height="1" fill="#4a3420"/><rect x="3" y="13" width="9" height="1" fill="#b8824f"/><rect x="12" y="13" width="1" height="1" fill="#4a3420"/><rect x="13" y="13" width="3" height="1" fill="#0c0a0a"/><rect x="0" y="14" width="4" height="1" fill="#0c0a0a"/><rect x="4" y="14" width="1" height="1" fill="#4a3420"/><rect x="5" y="14" width="5" height="1" fill="#b8824f"/><rect x="10" y="14" width="1" height="1" fill="#4a3420"/><rect x="11" y="14" width="5" height="1" fill="#0c0a0a"/><rect x="0" y="15" width="6" height="1" fill="#0c0a0a"/><rect x="6" y="15" width="4" height="1" fill="#4a3420"/><rect x="10" y="15" width="6" height="1" fill="#0c0a0a"/></svg><div class="t" style="left:27.50px;top:2px;font-size:12.0px;line-height:16px;color:#1a1a1a;font-family:'Liberation Sans',sans-serif;letter-spacing:-0.189px;">Athena [XAS data processing]</div><div style="left:675px;top:9px;width:10px;height:1px;background:#1a1a1a;"></div><div style="left:720px;top:5px;width:10px;height:9.5px;border:1px solid #1a1a1a;border-radius:1.5px;box-sizing:border-box;"></div><svg style="position:absolute;left:765px;top:4px" width="12" height="12"><path d="M1 1 L11 11 M11 1 L1 11" stroke="#1a1a1a" stroke-width="1.1"/></svg><div style="left:0px;top:25px;width:792px;height:18px;background:#ffffff;"></div><div style="left:0px;top:25px;width:30px;height:18px;background:#f9f9f9;"></div><div style="left:0px;top:43px;width:792px;height:1px;background:#f2f2f2;"></div><div class="t" style="left:4.20px;top:27px;font-size:13px;line-height:16px;color:#000;font-family:'Liberation Sans',sans-serif;letter-spacing:-0.783px;"><u>F</u>ile</div><div class="t" style="left:37.00px;top:27px;font-size:13px;line-height:16px;color:#000;font-family:'Liberation Sans',sans-serif;letter-spacing:0.113px;"><u>G</u>roup</div><div class="t" style="left:88.30px;top:27px;font-size:13px;line-height:16px;color:#000;font-family:'Liberation Sans',sans-serif;letter-spacing:-0.340px;"><u>E</u>nergy</div><div class="t" style="left:142.20px;top:27px;font-size:13px;line-height:16px;color:#000;font-family:'Liberation Sans',sans-serif;letter-spacing:0.550px;"><u>M</u>ark</div><div class="t" style="left:187.50px;top:27px;font-size:13px;line-height:16px;color:#000;font-family:'Liberation Sans',sans-serif;letter-spacing:-0.333px;"><u>P</u>lot</div><div class="t" style="left:223.20px;top:27px;font-size:13px;line-height:16px;color:#000;font-family:'Liberation Sans',sans-serif;letter-spacing:-0.650px;">Free<u>z</u>e</div><div class="t" style="left:275.50px;top:27px;font-size:13px;line-height:16px;color:#000;font-family:'Liberation Sans',sans-serif;letter-spacing:0.387px;">Me<u>r</u>ge</div><div class="t" style="left:328.40px;top:27px;font-size:13px;line-height:16px;color:#000;font-family:'Liberation Sans',sans-serif;letter-spacing:0.425px;">M<u>o</u>nitor</div><div class="t" style="left:389.40px;top:27px;font-size:13px;line-height:16px;color:#000;font-family:'Liberation Sans',sans-serif;letter-spacing:-0.383px;"><u>H</u>elp</div>
<div style="left:-1px;top:44px;width:342px;height:372px;background:#f9f9f9;border:1px solid #dedede;border-radius:0 5px 5px 0;box-sizing:border-box;box-shadow:1px 3px 7px rgba(0,0,0,0.11);"></div><div class="t" style="left:35.50px;top:50px;font-size:13.6px;line-height:16px;color:#000;font-family:'Liberation Sans',sans-serif;">Import data</div><div class="t" style="left:278.20px;top:50px;font-size:13px;line-height:16px;color:#000;font-family:'Liberation Sans',sans-serif;letter-spacing:0.290px;">Ctrl+o</div><div class="t" style="left:35.50px;top:72px;font-size:12.5px;line-height:16px;color:#000;font-family:'Liberation Sans',sans-serif;">Recent files</div><svg style="position:absolute;left:318px;top:75px" width="9" height="11"><path d="M2.5 1.5 L6.5 5.5 L2.5 9.5" fill="none" stroke="#1a1a1a" stroke-width="1.2"/></svg><div style="left:6px;top:95px;width:326px;height:1px;background:#dcdcdc;"></div><div class="t" style="left:35.50px;top:103px;font-size:12.9px;line-height:16px;color:#000;font-family:'Liberation Sans',sans-serif;">Save project</div><div class="t" style="left:278.20px;top:103px;font-size:13px;line-height:16px;color:#000;font-family:'Liberation Sans',sans-serif;letter-spacing:0.440px;">Ctrl+s</div><div class="t" style="left:35.50px;top:125px;font-size:12.6px;line-height:16px;color:#000;font-family:'Liberation Sans',sans-serif;">Save project as...</div><div class="t" style="left:35.50px;top:147px;font-size:13.1px;line-height:16px;color:#000;font-family:'Liberation Sans',sans-serif;">Save marked groups as a project ...</div><div class="t" style="left:35.50px;top:169px;font-size:13.2px;line-height:16px;color:#000;font-family:'Liberation Sans',sans-serif;">Backwards compatible project files</div><div class="t" style="left:35.50px;top:191px;font-size:13.3px;line-height:16px;color:#000;font-family:'Liberation Sans',sans-serif;">Project format</div><svg style="position:absolute;left:318px;top:194px" width="9" height="11"><path d="M2.5 1.5 L6.5 5.5 L2.5 9.5" fill="none" stroke="#1a1a1a" stroke-width="1.2"/></svg><div style="left:6px;top:214px;width:326px;height:1px;background:#dcdcdc;"></div><div class="t" style="left:35.50px;top:222px;font-size:13px;line-height:16px;color:#000;font-family:'Liberation Sans',sans-serif;">Save current group as ...</div><svg style="position:absolute;left:318px;top:225px" width="9" height="11"><path d="M2.5 1.5 L6.5 5.5 L2.5 9.5" fill="none" stroke="#1a1a1a" stroke-width="1.2"/></svg><div class="t" style="left:35.50px;top:244px;font-size:13px;line-height:16px;color:#000;font-family:'Liberation Sans',sans-serif;">Save marked groups as ...</div><svg style="position:absolute;left:318px;top:247px" width="9" height="11"><path d="M2.5 1.5 L6.5 5.5 L2.5 9.5" fill="none" stroke="#1a1a1a" stroke-width="1.2"/></svg><div style="left:3px;top:263px;width:331px;height:22px;background:#f0f0f0;border-radius:4px;"></div><div class="t" style="left:35.50px;top:266px;font-size:13px;line-height:16px;color:#000;font-family:'Liberation Sans',sans-serif;">Save each marked group as ...</div><svg style="position:absolute;left:318px;top:269px" width="9" height="11"><path d="M2.5 1.5 L6.5 5.5 L2.5 9.5" fill="none" stroke="#1a1a1a" stroke-width="1.2"/></svg><div class="t" style="left:35.50px;top:288px;font-size:13px;line-height:16px;color:#000;font-family:'Liberation Sans',sans-serif;">Export ...</div><svg style="position:absolute;left:318px;top:291px" width="9" height="11"><path d="M2.5 1.5 L6.5 5.5 L2.5 9.5" fill="none" stroke="#1a1a1a" stroke-width="1.2"/></svg><div style="left:6px;top:311px;width:326px;height:1px;background:#dcdcdc;"></div><div class="t" style="left:35.50px;top:319px;font-size:13px;line-height:16px;color:#000;font-family:'Liberation Sans',sans-serif;">Refresh project</div><div class="t" style="left:35.50px;top:341px;font-size:13px;line-height:16px;color:#000;font-family:'Liberation Sans',sans-serif;">Clear project name</div><div style="left:6px;top:364px;width:326px;height:1px;background:#dcdcdc;"></div><div class="t" style="left:35.50px;top:372px;font-size:13px;line-height:16px;color:#000;font-family:'Liberation Sans',sans-serif;">Close</div><div class="t" style="left:278.20px;top:372px;font-size:13px;line-height:16px;color:#000;font-family:'Liberation Sans',sans-serif;letter-spacing:-0.150px;">Ctrl+w</div><div class="t" style="left:35.50px;top:394px;font-size:13px;line-height:16px;color:#000;font-family:'Liberation Sans',sans-serif;">Exit</div><div class="t" style="left:278.20px;top:394px;font-size:13px;line-height:16px;color:#000;font-family:'Liberation Sans',sans-serif;letter-spacing:0.290px;">Ctrl+q</div><div style="left:336px;top:260px;width:143px;height:115px;background:#f9f9f9;border:1px solid #dedede;border-radius:5px;box-sizing:border-box;box-shadow:1px 3px 7px rgba(0,0,0,0.11);"></div><div class="t" style="left:373.40px;top:266px;font-size:13px;line-height:16px;color:#000;font-family:'Liberation Sans',sans-serif;letter-spacing:-0.833px;">μ(E)</div><div class="t" style="left:373.40px;top:288px;font-size:13px;line-height:16px;color:#000;font-family:'Liberation Sans',sans-serif;letter-spacing:-0.325px;">norm(E)</div><div class="t" style="left:373.40px;top:310px;font-size:13px;line-height:16px;color:#000;font-family:'Liberation Sans',sans-serif;letter-spacing:-0.233px;">χ(k)</div><div class="t" style="left:373.40px;top:332px;font-size:13px;line-height:16px;color:#000;font-family:'Liberation Sans',sans-serif;letter-spacing:-1.083px;">χ(R)</div><div class="t" style="left:373.40px;top:354px;font-size:13px;line-height:16px;color:#000;font-family:'Liberation Sans',sans-serif;letter-spacing:-0.367px;">χ(q)</div>
</body></html>
